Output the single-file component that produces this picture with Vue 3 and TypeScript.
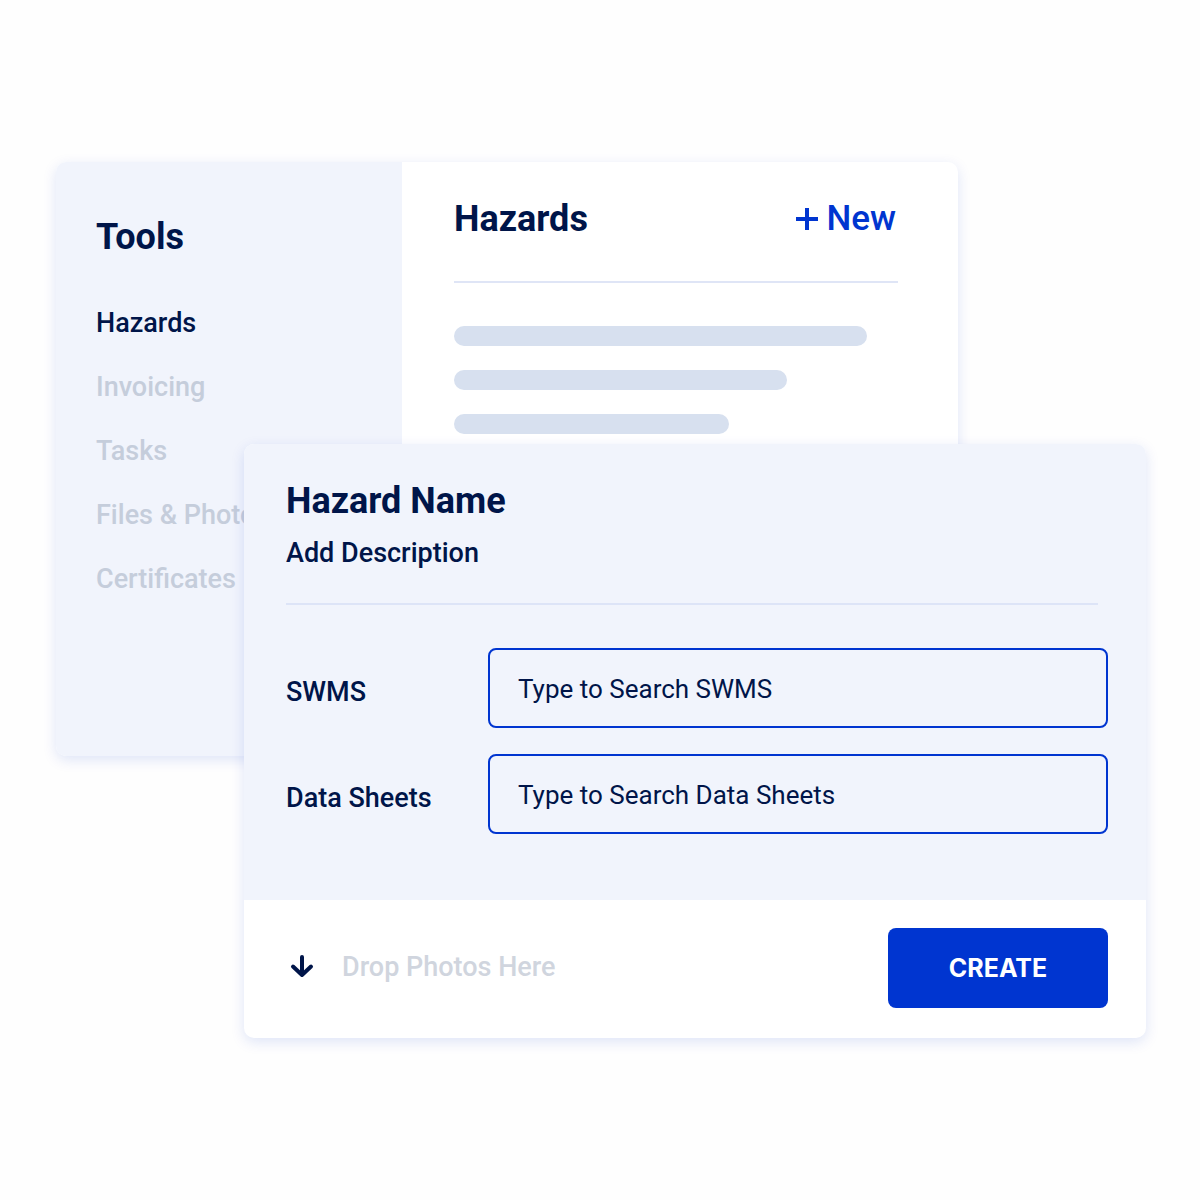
<script setup lang="ts">
import { ref } from 'vue'

interface Tool {
  name: string
  active?: boolean
}

interface Field {
  id: string
  label: string
  placeholder: string
}

const tools: Tool[] = [
  { name: 'Hazards', active: true },
  { name: 'Invoicing' },
  { name: 'Tasks' },
  { name: 'Files & Photos' },
  { name: 'Certificates' },
]

// Placeholder rows, as a percentage of the list width
const rows: number[] = [93, 75, 62]

const fields: Field[] = [
  { id: 'swms', label: 'SWMS', placeholder: 'Type to Search SWMS' },
  { id: 'sheets', label: 'Data Sheets', placeholder: 'Type to Search Data Sheets' },
]

const values = ref<Record<string, string>>({ swms: '', sheets: '' })
</script>

<template>
  <main class="stage">
    <section class="card browser">
      <nav class="sidebar">
        <h2 class="title">Tools</h2>
        <ul class="tools">
          <li v-for="tool in tools" :key="tool.name">
            <a href="#" class="tool" :class="{ active: tool.active }">{{ tool.name }}</a>
          </li>
        </ul>
      </nav>
      <div class="content">
        <header class="content-head">
          <h2 class="title">Hazards</h2>
          <button type="button" class="new">
            <svg width="22" height="22" viewBox="0 0 22 22" aria-hidden="true">
              <path d="M11 0V22M0 11H22" stroke="currentColor" stroke-width="4" />
            </svg>
            New
          </button>
        </header>
        <div class="rows">
          <div v-for="row in rows" :key="row" class="row" :style="{ width: row + '%' }"></div>
        </div>
      </div>
    </section>

    <form class="card dialog" @submit.prevent>
      <div class="dialog-body">
        <header class="dialog-head">
          <h2 class="title">Hazard Name</h2>
          <p class="description">Add Description</p>
        </header>
        <div class="fields">
          <div v-for="field in fields" :key="field.id" class="field">
            <label :for="field.id">{{ field.label }}</label>
            <input :id="field.id" v-model="values[field.id]" type="text" :placeholder="field.placeholder" />
          </div>
        </div>
      </div>
      <footer class="dialog-foot">
        <div class="drop">
          <svg width="24" height="24" viewBox="0 0 24 24" aria-hidden="true">
            <path
              d="M12 2V20M3 11.5L12 20L21 11.5"
              fill="none"
              stroke="currentColor"
              stroke-width="4"
              stroke-linecap="round"
              stroke-linejoin="round"
            />
          </svg>
          <span>Drop Photos Here</span>
        </div>
        <button type="submit" class="create">CREATE</button>
      </footer>
    </form>
  </main>
</template>

<style>
body {
  margin: 0;
  background: #fefefe;
}
</style>

<style scoped>
.stage {
  display: grid;
  align-items: start;
  padding: 162px 54px 162px 56px;
  color: #001549;
  font-family: Roboto, 'Liberation Sans', sans-serif;
  font-size: 27px;
  font-weight: 500;
  line-height: 32px;
}

/* Both cards share one grid cell, so the dialog overlaps the browser */
.card {
  grid-area: 1 / 1;
  overflow: hidden;
  border-radius: 10px;
  background: #fff;
  box-shadow: 0 4px 14px rgba(0, 51, 204, 0.13);
}

.browser {
  display: flex;
  min-height: 594px;
  margin-right: 188px;
}

.dialog {
  margin: 282px 0 0 188px;
}

.title {
  margin: 0;
  font-size: 36px;
  font-weight: 700;
  line-height: 42px;
}

.sidebar {
  flex: 0 0 346px;
  box-sizing: border-box;
  padding: 54px 40px;
  background: #f1f4fc;
}

.tools {
  display: flex;
  flex-direction: column;
  gap: 32px;
  margin: 49px 0 0;
  padding: 0;
  list-style: none;
}

.tool {
  display: block;
  color: #c5cddb;
  text-decoration: none;
}

.tool.active {
  color: #001549;
}

.content {
  flex: 1;
  padding: 36px 60px 36px 52px;
}

.content-head {
  display: flex;
  align-items: center;
  justify-content: space-between;
  padding-bottom: 41px;
  border-bottom: 2px solid #dfe5f6;
}

.new {
  display: flex;
  align-items: center;
  gap: 8px;
  padding: 0 2px;
  border: 0;
  background: none;
  color: #0035d0;
  font: inherit;
  font-size: 35px;
  line-height: 42px;
}

.rows {
  display: flex;
  flex-direction: column;
  gap: 24px;
  padding-top: 43px;
}

.row {
  height: 20px;
  border-radius: 10px;
  background: #d7e0ef;
}

.dialog-body {
  padding: 36px 38px 66px 42px;
  background: #f1f4fc;
}

.dialog-head {
  margin-right: 10px;
  padding-bottom: 34px;
  border-bottom: 2px solid #dde4f7;
}

.description {
  margin: 15px 0 0;
}

.fields {
  display: flex;
  flex-direction: column;
  gap: 26px;
  padding-top: 43px;
}

.field {
  display: flex;
  align-items: center;
}

.field label {
  flex: 0 0 202px;
  padding-top: 8px;
}

.field input {
  flex: 1;
  min-width: 0;
  box-sizing: border-box;
  height: 80px;
  padding: 2px 28px 0;
  border: 2px solid #0035d0;
  border-radius: 8px;
  background: transparent;
  color: #001549;
  font: inherit;
  font-size: 26px;
  font-weight: 400;
}

.field input::placeholder {
  color: #001549;
  opacity: 1;
}

.dialog-foot {
  display: flex;
  align-items: center;
  justify-content: space-between;
  padding: 28px 38px 30px 46px;
}

.drop {
  display: flex;
  align-items: center;
  gap: 28px;
  padding-bottom: 2px;
}

.drop span {
  color: #d0d5de;
}

.create {
  width: 220px;
  height: 80px;
  border: 0;
  border-radius: 8px;
  background: #0035d0;
  color: #fff;
  font-family: Inter, Roboto, sans-serif;
  font-size: 25px;
  font-weight: 700;
}
</style>
